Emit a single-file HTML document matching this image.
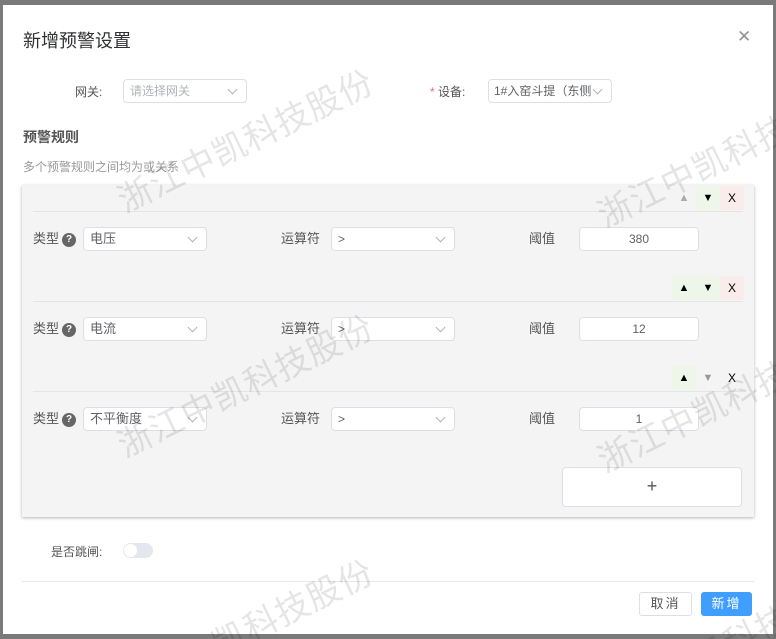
<!DOCTYPE html>
<html><head><meta charset="utf-8"><style>
*{box-sizing:border-box;margin:0;padding:0}
html,body{width:776px;height:639px;overflow:hidden}
body{background:#7a7a7a;font-family:"Liberation Sans","Noto Sans CJK SC",sans-serif;position:relative;color:#606266}
.modal{position:absolute;left:3px;top:5px;width:770px;height:629px;background:#fff}
.a{position:absolute}
.title{left:20px;top:22px;font-size:18px;color:#303133}
.close{left:734px;top:22px;font-size:17px;color:#909399;font-weight:300}
.sel{position:absolute;background:#fff;border:1px solid #dcdfe6;border-radius:4px;height:24px;font-size:12px;line-height:22px;padding-left:6px;color:#606266;overflow:hidden;white-space:nowrap}
.sel:after{content:"";position:absolute;right:10px;top:6px;width:6px;height:6px;border-right:1px solid #b0b3b9;border-bottom:1px solid #b0b3b9;transform:rotate(45deg)}
.inp{position:absolute;background:#fff;border:1px solid #dcdfe6;border-radius:4px;height:24px;font-size:12px;line-height:22px;text-align:center;color:#606266}
.box{left:19px;top:180px;width:732px;height:332px;background:#f4f4f4;box-shadow:0 1px 3px rgba(0,0,0,.3)}
.line{position:absolute;left:11px;width:710px;height:1px;background:#e4e4e4}
.lab{position:absolute;font-size:13px;color:#555}
.q{display:inline-block;width:14px;height:14px;border-radius:50%;background:#666;color:#fff;font-size:10px;line-height:14px;text-align:center;font-weight:bold;vertical-align:1px;margin-left:3px}
.btns{position:absolute;left:650px;width:72px;height:24px}
.btns span{position:absolute;top:0;width:24px;height:24px;font-size:11px;line-height:24px;text-align:center;color:#000}
.wmw{position:absolute;left:0;top:0;width:776px;height:639px;overflow:hidden;pointer-events:none}
.wm{position:absolute;font-size:34px;color:rgba(0,0,0,.1);transform:rotate(-26deg);transform-origin:0 0;white-space:nowrap;font-family:"Noto Sans CJK SC",sans-serif;letter-spacing:1px}
</style></head><body>
<div class="modal">
<div class="a title">新增预警设置</div>
<div class="a close">✕</div>
<div class="lab" style="left:72px;top:78px;font-size:12px">网关:</div>
<div class="sel" style="left:120px;top:74px;width:124px;color:#b0b3b9">请选择网关</div>
<div class="lab" style="left:427px;top:78px;font-size:12px"><span style="color:#f56c6c">*</span> 设备:</div>
<div class="sel" style="left:485px;top:74px;width:124px;padding-left:5px;padding-right:22px">1#入窑斗提（东侧</div>
<div class="a" style="left:20px;top:122px;font-size:14px;font-weight:bold;color:#555">预警规则</div>
<div class="a" style="left:20px;top:153px;font-size:12px;color:#999">多个预警规则之间均为或关系</div>
<div class="a box">
  <div class="btns" style="top:1px"><span style="left:0;color:#aaa">▲</span><span style="left:24px;background:#eef6ea">▼</span><span style="left:48px;background:#fbecec;font-size:12px">X</span></div>
  <div class="line" style="top:26px"></div>
  <div class="lab" style="left:11px;top:43px">类型<span class="q">?</span></div>
  <div class="sel" style="left:61px;top:42px;width:124px;font-size:13px">电压</div>
  <div class="lab" style="left:259px;top:43px">运算符</div>
  <div class="sel" style="left:309px;top:42px;width:124px">&gt;</div>
  <div class="lab" style="left:507px;top:43px">阈值</div>
  <div class="inp" style="left:557px;top:42px;width:120px">380</div>

  <div class="btns" style="top:91px"><span style="left:0;background:#eef6ea">▲</span><span style="left:24px;background:#eef6ea">▼</span><span style="left:48px;background:#fbecec;font-size:12px">X</span></div>
  <div class="line" style="top:116px"></div>
  <div class="lab" style="left:11px;top:133px">类型<span class="q">?</span></div>
  <div class="sel" style="left:61px;top:132px;width:124px;font-size:13px">电流</div>
  <div class="lab" style="left:259px;top:133px">运算符</div>
  <div class="sel" style="left:309px;top:132px;width:124px">&gt;</div>
  <div class="lab" style="left:507px;top:133px">阈值</div>
  <div class="inp" style="left:557px;top:132px;width:120px">12</div>

  <div class="btns" style="top:181px"><span style="left:0;background:#eef6ea">▲</span><span style="left:24px;color:#999">▼</span><span style="left:48px;font-size:12px">X</span></div>
  <div class="line" style="top:206px"></div>
  <div class="lab" style="left:11px;top:223px">类型<span class="q">?</span></div>
  <div class="sel" style="left:61px;top:222px;width:124px;font-size:13px">不平衡度</div>
  <div class="lab" style="left:259px;top:223px">运算符</div>
  <div class="sel" style="left:309px;top:222px;width:124px">&gt;</div>
  <div class="lab" style="left:507px;top:223px">阈值</div>
  <div class="inp" style="left:557px;top:222px;width:120px">1</div>

  <div class="inp" style="left:540px;top:282px;width:180px;height:40px;line-height:36px;font-size:18px;color:#555">+</div>
</div>
<div class="lab" style="left:48px;top:538px;font-size:12px">是否跳闸:</div>
<div class="a" style="left:120px;top:538px;width:30px;height:15px;border-radius:8px;background:#e4e7ed"><div style="position:absolute;left:1px;top:1px;width:13px;height:13px;border-radius:50%;background:#fff"></div></div>
<div class="a" style="left:19px;top:576px;width:732px;height:1px;background:#e4e7ed"></div>
<div class="a" style="left:636px;top:587px;width:53px;height:24px;border:1px solid #dcdfe6;border-radius:3px;font-size:13px;line-height:22px;text-align:center;color:#555;letter-spacing:2px">取消</div>
<div class="a" style="left:698px;top:587px;width:51px;height:24px;background:#409eff;border-radius:3px;font-size:13px;line-height:24px;text-align:center;color:#fff;letter-spacing:2px">新增</div>
</div>
<div class="wmw">
<div class="wm" style="left:108px;top:178px">浙江中凯科技股份</div>
<div class="wm" style="left:588px;top:193px">浙江中凯科技股份</div>
<div class="wm" style="left:108px;top:423px">浙江中凯科技股份</div>
<div class="wm" style="left:588px;top:438px">浙江中凯科技股份</div>
<div class="wm" style="left:108px;top:668px">浙江中凯科技股份</div>
<div class="wm" style="left:588px;top:683px">浙江中凯科技股份</div>
</div>
</body></html>
